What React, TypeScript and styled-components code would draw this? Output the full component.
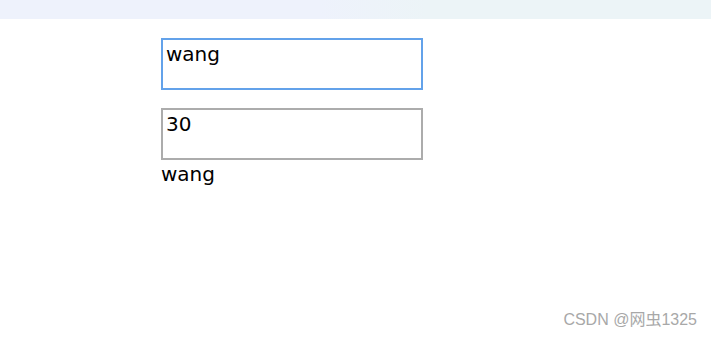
import { FC } from 'react';
import styled, { createGlobalStyle } from 'styled-components';

const GlobalStyle = createGlobalStyle`
  html, body {
    margin: 0;
    padding: 0;
    background: #fff;
  }
  body {
    font-family: "DejaVu Sans", "Noto Sans CJK SC", sans-serif;
  }
`;

const App: FC = () => {
  return (
    <Page>
      <GlobalStyle />
      <TopBar />
      <Form>
        <Field $focused>wang</Field>
        <Field>30</Field>
        <Output>wang</Output>
      </Form>
      <Watermark>CSDN @网虫1325</Watermark>
    </Page>
  );
};

const Page = styled.div`
  position: relative;
  width: 711px;
  height: 338px;
  overflow: hidden;
`;
const TopBar = styled.div`
  height: 19px;
  background: linear-gradient(90deg, #eef2fc 0%, #eef2fc 45%, #ecf4f7 60%, #ecf4f7 100%);
`;
const Form = styled.div`
  display: flex;
  flex-direction: column;
  align-items: flex-start;
  padding: 19px 0 0 161px;
  gap: 18px;
`;
const Field = styled.div<{ $focused?: boolean }>`
  box-sizing: border-box;
  width: 262px;
  height: 52px;
  padding: 2px 3px;
  border: 2px solid ${(p) => (p.$focused ? '#63a2ea' : '#acacac')};
  font-size: 20px;
  line-height: 25px;
  color: #000;
`;
const Output = styled.div`
  margin-top: -17px;
  font-size: 20px;
  line-height: 27px;
  color: #000;
`;
const Watermark = styled.div`
  position: absolute;
  right: 14px;
  bottom: 8px;
  font-family: "Liberation Sans", "Noto Sans CJK SC", sans-serif;
  font-size: 16px;
  color: #a8a8a8;
`;

export default App;
